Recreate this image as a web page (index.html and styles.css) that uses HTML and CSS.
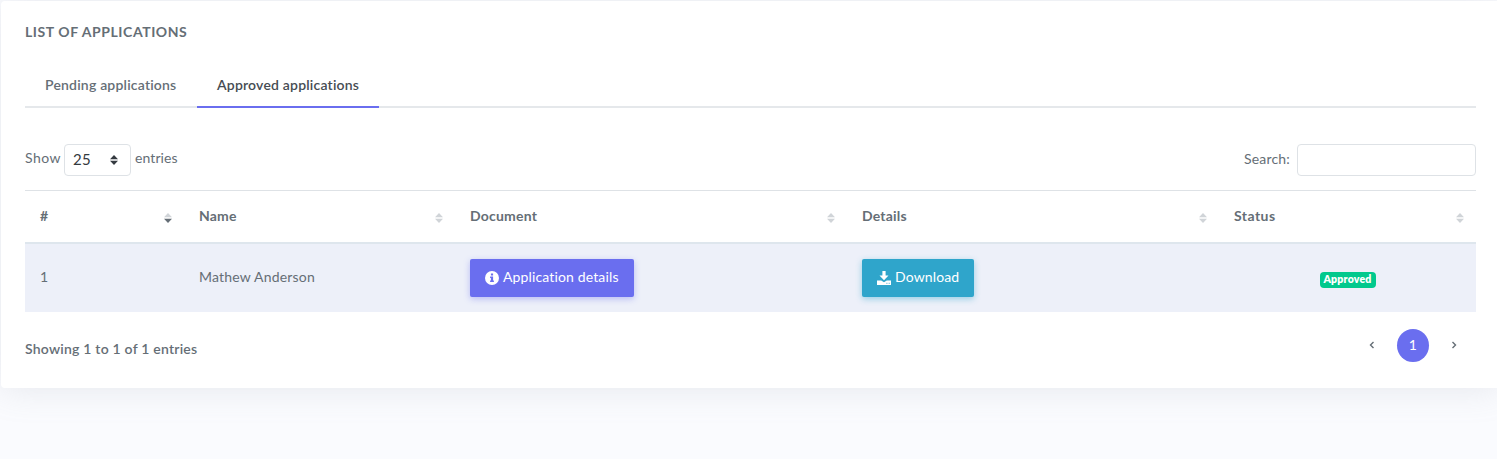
FILE: index.html
```html
<!DOCTYPE html>
<html lang="en">
<head>
<meta charset="utf-8">
<title>List of applications</title>
<link rel="stylesheet" href="styles.css">
</head>
<body>
<svg class="defs" width="0" height="0">
  <symbol id="sort" viewBox="0 0 8 10"><path class="up" d="M4 0L8 4.200H0z"/><path class="down" d="M0 5.800h8L4 10z"/></symbol>
</svg>
<main class="card">
  <h4 class="title"><span>List of applications</span></h4>
  <nav class="tabs">
    <a class="tab tab-pending"><span>Pending applications</span></a>
    <a class="tab tab-approved active"><span>Approved applications</span></a>
  </nav>
  <div class="controls">
    <div class="length">
      <span class="show">Show</span>
      <div class="select"><span>25</span><svg width="8" height="10" viewBox="0 0 8 10"><path d="M4 0L8 4.2H0zM0 5.8h8L4 10z" fill="#343a40"/></svg></div>
      <span class="entries">entries</span>
    </div>
    <label class="search"><span>Search:</span><input type="text"></label>
  </div>
  <section class="table">
    <div class="row head">
      <div class="cell sorted"><span>#</span><svg class="sort"><use href="#sort"/></svg></div>
      <div class="cell"><span>Name</span><svg class="sort"><use href="#sort"/></svg></div>
      <div class="cell"><span>Document</span><svg class="sort"><use href="#sort"/></svg></div>
      <div class="cell"><span>Details</span><svg class="sort"><use href="#sort"/></svg></div>
      <div class="cell"><span class="h-status">Status</span><svg class="sort"><use href="#sort"/></svg></div>
    </div>
    <div class="row body">
      <div class="cell"><span class="text">1</span></div>
      <div class="cell"><span class="text">Mathew Anderson</span></div>
      <div class="cell"><button class="btn primary"><svg width="14" height="14" viewBox="0 0 14 14"><circle cx="7" cy="7" r="7" fill="#fff"/><path d="M5.900 2.600h2.200v1.900H5.900zM5.100 5.600h3v4h.8v1.500H5.100V9.600h.8V7.100h-.8z" fill="#6a6eef"/></svg><span>Application details</span></button></div>
      <div class="cell"><button class="btn info"><svg width="14" height="14" viewBox="0 0 14 14"><path d="M5.400 0h3.200v4.500h2.900L7 9.200 2.500 4.500h2.900z" fill="#fff"/><path d="M0 9.500h4.200L7 11.300l2.800-1.800H14V14H0z" fill="#fff"/><path d="M9.400 12.300h1M11.700 12.300h1" stroke="#2fa5cb" stroke-width=".9"/></svg><span>Download</span></button></div>
      <div class="cell center"><span class="badge">Approved</span></div>
    </div>
  </section>
  <footer class="footer">
    <span class="summary">Showing 1 to 1 of 1 entries</span>
    <div class="pages">
      <svg class="arrow" width="6" height="8" viewBox="0 0 6 8"><path d="M4.500 1L1.500 4l3 3"/></svg>
      <span class="page">1</span>
      <svg class="arrow" width="6" height="8" viewBox="0 0 6 8"><path d="M1.500 1l3 3-3 3"/></svg>
    </div>
  </footer>
</main>
</body>
</html>
```
FILE: styles.css
```css
* { box-sizing: border-box; }
html { background: #fafbfe; }
body { margin: 0; padding: 1px 0 0 1px; height: 459px; overflow: hidden; background: #fafbfe; color: #656e76; font: 14px/20px Lato, "Open Sans", sans-serif; letter-spacing: .2px; }
.defs { display: block; height: 0; }
.card { width: 1499px; height: 387px; padding: 21px 24px 0; border-radius: 4px; background: #fff; box-shadow: 0 0 35px rgba(154,161,171,.22); }
.title { margin: 0; font-size: 14px; line-height: 20px; font-weight: 700; text-transform: uppercase; letter-spacing: .56px; }
.tabs, .controls, .table, .footer { width: 1451px; }
.tabs { display: flex; height: 46px; margin-top: 20px; border-bottom: 2px solid #e5e8eb; }
.tab { height: 46px; padding: 13px 20px 0; font-weight: 600; white-space: nowrap; border-bottom: 2px solid transparent; }
.tab-pending { width: 172px; }
.tab-approved { width: 182px; }
.tab.active { color: #464c53; border-color: #6a6eef; }
.controls { display: flex; justify-content: space-between; margin-top: 36px; height: 32px; }
.length { display: flex; }
.show { width: 39px; padding-top: 4px; letter-spacing: .45px; }
.entries { padding: 4px 0 0 4px; letter-spacing: .1px; }
.select { display: flex; justify-content: space-between; align-items: center; width: 67px; height: 32px; padding: 0 12px 0 8px; border: 1px solid #dee2e6; border-radius: 4px; color: #343a40; font-size: 15px; }
.select span { padding-bottom: 2px; }
.search { display: flex; gap: 7px; }
.search span { padding-top: 5px; }
.search input { width: 179px; height: 32px; padding: 4px 8px; border: 1px solid #dee2e6; border-radius: 4px; background: #fff; }
.table { margin-top: 14px; }
.row { display: grid; grid-template-columns: 159px 271px 392px 372px 257px; align-items: center; }
.cell { display: flex; align-items: center; padding: 0 15px; }
.head { height: 54px; border-top: 1px solid #dee2e6; border-bottom: 2px solid #dee6ed; font-weight: 700; }
.head .cell { justify-content: space-between; padding-right: 12px; }
.head span, .text { padding-bottom: 2px; }
.h-status { letter-spacing: .45px; }
.sort { width: 8px; height: 10px; margin-top: 3px; fill: #d0d4d8; }
.sorted .sort { --down: #656e76; }
.down { fill: var(--down, #d0d4d8); }
.body { height: 68px; background: #edf0f9; }
.btn { display: flex; align-items: center; height: 38px; padding: 0 15px; gap: 4px; border: 0; border-radius: 2px; color: #fff; font: inherit; letter-spacing: .14px; white-space: nowrap; }
.btn svg { flex: none; margin-bottom: 1px; }
.btn span { padding-bottom: 2px; }
.primary { width: 164px; background: #6a6eef; box-shadow: 0 2px 6px rgba(106,110,239,.4); }
.info { width: 112px; background: #2fa5cb; box-shadow: 0 2px 6px rgba(47,165,203,.45); }
.center { justify-content: center; }
.badge { width: 56px; height: 16px; margin-top: 4px; border-radius: 4px; background: #02c98d; color: #fff; font-size: 10.500px; font-weight: 800; line-height: 14px; text-align: center; letter-spacing: .2px; }
.footer { display: flex; justify-content: space-between; height: 76px; }
.summary { padding-top: 27px; font-weight: 600; letter-spacing: .22px; }
.pages { display: flex; align-items: center; height: 33px; margin: 17px 19px 0 0; gap: 22px; }
.page { width: 32px; height: 33px; border-radius: 50%; background: #6a6eef; color: #fff; line-height: 32px; text-align: center; }
.arrow { margin-bottom: 1px; fill: none; stroke: #656e76; stroke-width: 1.400; }
```
